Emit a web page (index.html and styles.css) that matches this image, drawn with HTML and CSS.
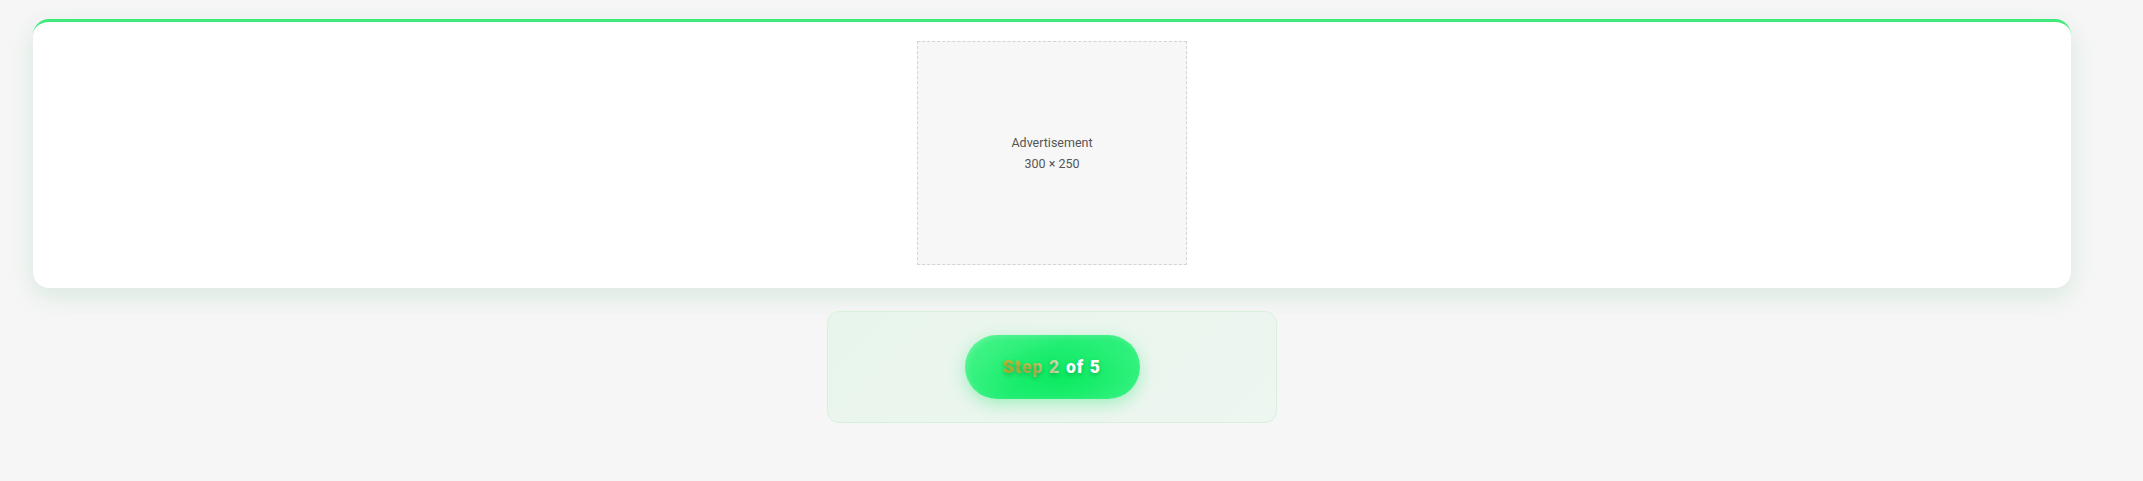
FILE: index.html
```html
<!DOCTYPE html>
<html lang="en">
<head>
    <meta charset="UTF-8">
    <meta name="viewport" content="width=device-width, initial-scale=1.0">
    <title>Step 2 of 5</title>
    <link rel="stylesheet" href="styles.css">
</head>
<body>
    <div class="page">
        <div class="ad-card">
            <div class="ad-slot">
                <div class="ad-label">Advertisement</div>
                <div class="ad-size">300 × 250</div>
            </div>
        </div>

        <div class="step-panel">
            <div class="step-pill">
                <span class="step-text"><span class="step-highlight">Step 2</span> of 5</span>
            </div>
        </div>
    </div>
</body>
</html>
```

FILE: styles.css
```css
/* Page background and container */
body {
    margin: 0;
    font-family: Roboto, 'Liberation Sans', sans-serif;
    background: #f6f6f6;
    color: #333;
}

.page {
    padding: 19px 72px 40px 33px;
    display: flex;
    flex-direction: column;
    align-items: center;
    gap: 23px;
}

/* White card holding the ad */
.ad-card {
    box-sizing: border-box;
    width: 100%;
    height: 269px;
    background: #fff;
    border-top: 3px solid #3fe97b;
    border-radius: 16px;
    box-shadow: 0 8px 26px rgba(60, 170, 100, 0.16);
    display: flex;
    justify-content: center;
    padding-top: 19px;
}

.ad-slot {
    box-sizing: border-box;
    width: 270px;
    height: 224px;
    background: #f7f7f7;
    border: 1px dashed #d4d4d4;
    display: flex;
    flex-direction: column;
    align-items: center;
    justify-content: center;
    font-size: 12.5px;
    line-height: 21px;
    color: #555;
}

/* Step indicator */
.step-panel {
    box-sizing: border-box;
    width: 450px;
    height: 112px;
    background: linear-gradient(135deg, #e8f5ec 0%, #edf6f0 100%);
    border: 1px solid #d6f2dd;
    border-radius: 12px;
    display: flex;
    align-items: center;
    justify-content: center;
}

.step-pill {
    box-sizing: border-box;
    width: 175px;
    height: 64px;
    border-radius: 32px;
    background:
        radial-gradient(ellipse at 55% 65%, rgba(10, 234, 94, 0.95) 0%, rgba(10, 234, 94, 0) 60%),
        linear-gradient(135deg, #45f488 0%, #22ee74 45%, #36f281 100%);
    box-shadow: 0 5px 16px rgba(20, 230, 100, 0.35), inset 2px 2px 6px rgba(255, 255, 255, 0.18);
    display: flex;
    align-items: center;
    justify-content: center;
}

.step-text {
    color: #fff;
    font-size: 17.5px;
    font-weight: 900;
    letter-spacing: 1.1px;
    text-shadow: 0 2px 4px rgba(0, 80, 30, 0.3);
    white-space: nowrap;
}

.step-highlight {
    background: linear-gradient(90deg, #cdb92c 0%, #c6c258 55%, #e2ebcc 100%);
    -webkit-background-clip: text;
    background-clip: text;
    color: transparent;
}
```
